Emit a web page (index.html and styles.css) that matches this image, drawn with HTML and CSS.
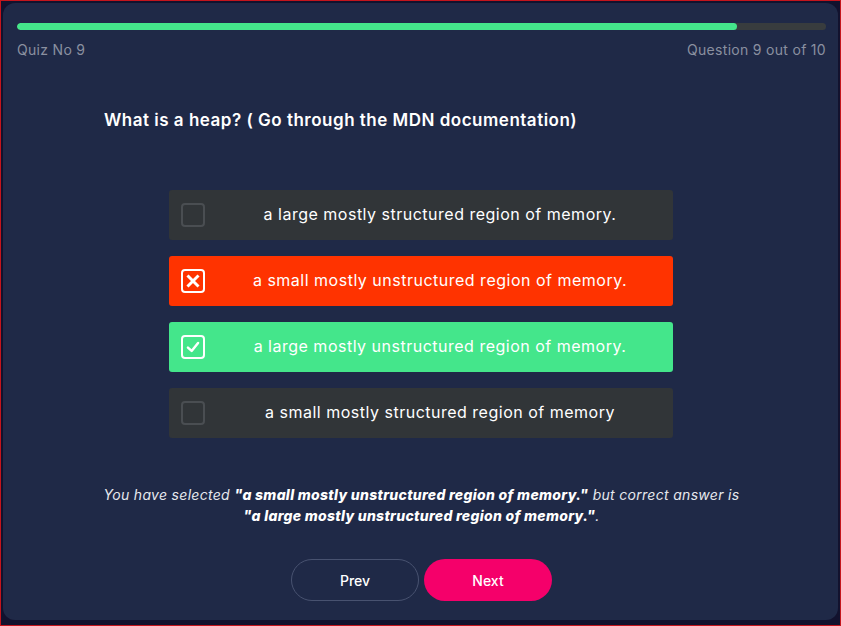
FILE: index.html
```html
<!DOCTYPE html>
<html>
<head>
<meta charset="utf-8">
<link rel="stylesheet" href="styles.css">
</head>
<body>
<div class="frame">
  <div class="card">
    <div class="progress"><div class="progress-fill" style="width: 89%"></div></div>
    <div class="meta">
      <span>Quiz No 9</span>
      <span>Question 9 out of 10</span>
    </div>
    <h2 class="question">What is a heap? ( Go through the MDN documentation)</h2>
    <div class="options">
      <div class="option">
        <span class="box"></span>
        <span class="label">a large mostly structured region of memory.</span>
      </div>
      <div class="option wrong">
        <span class="box white"><svg viewBox="0 0 16 16" width="18" height="18"><path d="M4 4 L12 12 M12 4 L4 12" stroke="#fff" stroke-width="2.6" stroke-linecap="square" fill="none"/></svg></span>
        <span class="label">a small mostly unstructured region of memory.</span>
      </div>
      <div class="option right">
        <span class="box white"><svg viewBox="0 0 16 16" width="18" height="18"><path d="M3.5 8.5 L6.8 11.5 L12.5 4.5" stroke="#fff" stroke-width="2.2" stroke-linecap="round" stroke-linejoin="round" fill="none"/></svg></span>
        <span class="label">a large mostly unstructured region of memory.</span>
      </div>
      <div class="option">
        <span class="box"></span>
        <span class="label">a small mostly structured region of memory</span>
      </div>
    </div>
    <p class="feedback">You have selected <b>"a small mostly unstructured region of memory."</b> but correct answer is<br><b>"a large mostly unstructured region of memory."</b>.</p>
    <div class="buttons">
      <button class="btn prev">Prev</button>
      <button class="btn next">Next</button>
    </div>
  </div>
</div>
</body>
</html>
```
FILE: styles.css
```css
* { box-sizing: border-box; }
html, body { margin: 0; padding: 0; }
body {
  font-family: "Inter", "Open Sans", sans-serif;
  background: #12122e;
}
.frame {
  width: 841px;
  height: 626px;
  border: 1px solid #c4151c;
  padding: 2px;
  background: #12122e;
}
.card {
  height: 617px;
  background: #1f2947;
  border-radius: 12px;
  padding: 20px 12px 0 14px;
}
.progress {
  height: 7px;
  border-radius: 4px;
  background: #383c3e;
  overflow: hidden;
}
.progress-fill {
  height: 100%;
  border-radius: 4px;
  background: #44e68b;
}
.meta {
  display: flex;
  justify-content: space-between;
  margin-top: 10px;
  line-height: 20px;
  font-size: 14px;
  color: #8a90a0;
  letter-spacing: 0.3px;
}
.question {
  margin: 48px 0 0 87px;
  font-size: 17px;
  line-height: 24px;
  font-weight: 600;
  letter-spacing: 0.5px;
  color: #ffffff;
}
.options {
  margin: 58px 0 0 152px;
  width: 504px;
  display: flex;
  flex-direction: column;
  gap: 16px;
}
.option {
  height: 50px;
  border-radius: 3px;
  background: #313538;
  display: flex;
  align-items: center;
  padding-left: 12px;
  color: #ffffff;
  font-size: 16px;
  letter-spacing: 0.5px;
}
.option.wrong { background: #ff3300; }
.option.right { background: #44e68b; }
.box {
  width: 24px;
  height: 24px;
  border: 2px solid #4a4e52;
  border-radius: 4px;
  display: flex;
  align-items: center;
  justify-content: center;
  flex: none;
}
.box.white { border-color: #ffffff; }
.label {
  flex: 1;
  text-align: center;
  padding: 0 0 2px 2px;
}
.feedback {
  margin: 46px 0 0;
  text-align: center;
  font-style: italic;
  font-size: 14px;
  line-height: 21px;
  letter-spacing: 0.3px;
  color: #e6e8ee;
}
.feedback b { font-weight: 800; color: #ffffff; }
.buttons {
  margin-top: 33px;
  display: flex;
  justify-content: center;
  gap: 5px;
  padding-left: 0;
}
.btn {
  width: 128px;
  height: 42px;
  border-radius: 21px;
  font-family: inherit;
  font-size: 14px;
  font-weight: 500;
  color: #ffffff;
  cursor: pointer;
}
.prev {
  background: transparent;
  border: 1px solid #485270;
}
.next {
  background: #f5006a;
  border: none;
}
```
